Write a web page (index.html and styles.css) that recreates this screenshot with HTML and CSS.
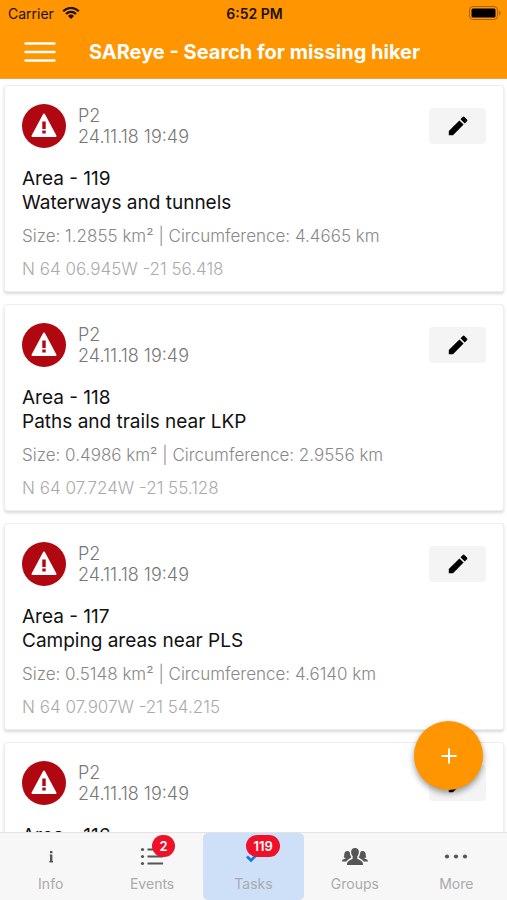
FILE: index.html
```html
<!DOCTYPE html>
<html lang="en">
<head>
<meta charset="utf-8">
<meta name="viewport" content="width=device-width, initial-scale=1">
<title>SAReye - Search for missing hiker</title>
<link rel="stylesheet" href="styles.css">
</head>
<body>
<svg class="sprite" aria-hidden="true">
  <symbol id="alert" viewBox="0 0 44 44">
    <circle cx="22" cy="22" r="22" fill="#b00710"/>
    <path d="M22 10.500 33.500 32h-23z" fill="#fff" stroke="#fff" stroke-width="2" stroke-linejoin="round"/>
    <path d="M20.300 17.500h3.400v7.500h-3.400zM20.300 26.500h3.400v3h-3.400z" fill="#b00710"/>
  </symbol>
  <symbol id="pencil" viewBox="0 0 20 20">
    <path d="M.8 15V19.200h4.200L15.600 8.600l-4.200-4.200zM19 5.200a1.200 1.200 0 0 0 0-1.700L16.500 1a1.200 1.200 0 0 0-1.700 0l-2.300 2.300 4.200 4.200z"/>
  </symbol>
</svg>
<div class="app">
  <header class="header">
    <div class="status">
      <div class="carrier">
        <span>Carrier</span>
        <svg width="18" height="12" viewBox="0 0 18 12" aria-hidden="true">
          <path d="M1.200 4.200a11 11 0 0 1 15.600 0M4 7a7 7 0 0 1 10 0" fill="none" stroke="#1c1000" stroke-width="2.200"/>
          <path d="M6 9a4.300 4.300 0 0 1 6 0l-3 3z" fill="#1c1000"/>
        </svg>
      </div>
      <div class="clock">6:52 PM</div>
      <div class="battery">
        <svg width="32" height="14" viewBox="0 0 32 14" aria-hidden="true">
          <rect x=".5" y=".5" width="28" height="13" rx="3.500" fill="none" stroke="#a86000"/>
          <rect x="2.500" y="2.500" width="24" height="9" rx="1.500"/>
          <path d="M30 4.700a2.500 2.500 0 0 1 0 4.600z" fill="#a86000"/>
        </svg>
      </div>
    </div>
    <div class="toolbar">
      <button class="menu" aria-label="Menu">
        <svg width="32" height="20" viewBox="0 0 32 20" aria-hidden="true">
          <path d="M1.500 1.500h29M1.500 10h29M1.500 18.500h29" stroke="#fff" stroke-width="2.400" stroke-linecap="round"/>
        </svg>
      </button>
      <h1>SAReye - Search for missing hiker</h1>
    </div>
  </header>

  <main class="list">
    <article class="card">
      <div class="card-head">
        <svg class="alert" aria-hidden="true"><use href="#alert"/></svg>
        <div class="meta">P2<br>24.11.18 19:49</div>
        <button class="edit" aria-label="Edit area 119"><svg aria-hidden="true"><use href="#pencil"/></svg></button>
      </div>
      <h2>Area - 119<br>Waterways and tunnels</h2>
      <p class="size">Size: 1.2855 km² | Circumference: 4.4665 km</p>
      <p class="coords">N 64 06.945W -21 56.418</p>
    </article>
    <article class="card">
      <div class="card-head">
        <svg class="alert" aria-hidden="true"><use href="#alert"/></svg>
        <div class="meta">P2<br>24.11.18 19:49</div>
        <button class="edit" aria-label="Edit area 118"><svg aria-hidden="true"><use href="#pencil"/></svg></button>
      </div>
      <h2>Area - 118<br>Paths and trails near LKP</h2>
      <p class="size">Size: 0.4986 km² | Circumference: 2.9556 km</p>
      <p class="coords">N 64 07.724W -21 55.128</p>
    </article>
    <article class="card">
      <div class="card-head">
        <svg class="alert" aria-hidden="true"><use href="#alert"/></svg>
        <div class="meta">P2<br>24.11.18 19:49</div>
        <button class="edit" aria-label="Edit area 117"><svg aria-hidden="true"><use href="#pencil"/></svg></button>
      </div>
      <h2>Area - 117<br>Camping areas near PLS</h2>
      <p class="size">Size: 0.5148 km² | Circumference: 4.6140 km</p>
      <p class="coords">N 64 07.907W -21 54.215</p>
    </article>
    <article class="card">
      <div class="card-head">
        <svg class="alert" aria-hidden="true"><use href="#alert"/></svg>
        <div class="meta">P2<br>24.11.18 19:49</div>
        <button class="edit" aria-label="Edit area 116"><svg aria-hidden="true"><use href="#pencil"/></svg></button>
      </div>
      <h2>Area - 116</h2>
    </article>
  </main>

  <div class="dock">
    <button class="fab" aria-label="Add task">
      <svg width="16" height="16" viewBox="0 0 16 16" aria-hidden="true"><path d="M8 .5v15M.5 8h15" stroke="#fff" stroke-width="2"/></svg>
    </button>
    <nav class="tabs">
      <a class="tab" href="#info">
        <svg class="tab-icon" viewBox="0 0 28 24" aria-hidden="true"><path d="M13 6h2.400v2.200H13zM12.800 9.600h2.600V16h.6v1.400h-3.600V16h.6v-5h-.2z" fill="#555"/></svg>
        <span>Info</span>
      </a>
      <a class="tab" href="#events">
        <svg class="tab-icon" viewBox="0 0 28 24" aria-hidden="true">
          <path d="M9.500 4.500H25M9.500 11.500H25M9.500 18.500H25" stroke="#555" stroke-width="2"/>
          <g fill="#555"><circle cx="4.500" cy="4.500" r="1.600"/><circle cx="4.500" cy="11.500" r="1.600"/><circle cx="4.500" cy="18.500" r="1.600"/></g>
        </svg>
        <span>Events</span>
        <b class="badge">2</b>
      </a>
      <a class="tab active" href="#tasks" aria-current="page">
        <svg class="tab-icon" viewBox="0 0 28 24" aria-hidden="true"><path d="M8 11.500l4 4 10-10" fill="none" stroke="#1275e8" stroke-width="2.600"/></svg>
        <span>Tasks</span>
        <b class="badge wide">119</b>
      </a>
      <a class="tab" href="#groups">
        <svg class="tab-icon" viewBox="0 0 28 24" aria-hidden="true">
          <g fill="#555">
            <path d="M14 3c2.700 0 4 1.800 3.900 4.300-.1 1.800-.8 3-1.600 4v2.200c.3 1.300 5.700 1.700 5.700 5.500v1H6v-1c0-3.800 5.400-4.200 5.700-5.500v-2.200c-.8-1-1.500-2.200-1.600-4C10 4.800 11.300 3 14 3z"/>
            <path d="M6.200 6c1 0 2 .4 2.500 1.100.1 2.500.8 4 1.700 5.200-.7 1.300-3.900 1.800-5 4.200H1c0-2.700 3-2.200 3.600-3.300.1-.6-1.700-.4-2-1.200.8-.8.500-2.300.8-3.600C3.700 6.900 4.700 6 6.200 6zM21.800 6c-1 0-2 .4-2.500 1.100-.1 2.500-.8 4-1.700 5.200.7 1.300 3.900 1.800 5 4.200H27c0-2.700-3-2.200-3.600-3.300-.1-.6 1.700-.4 2-1.200-.8-.8-.5-2.300-.8-3.600C24.300 6.900 23.300 6 21.800 6z"/>
          </g>
        </svg>
        <span>Groups</span>
      </a>
      <a class="tab" href="#more">
        <svg class="tab-icon" viewBox="0 0 28 24" aria-hidden="true"><g fill="#555"><circle cx="5" cy="11.500" r="2.100"/><circle cx="14" cy="11.500" r="2.100"/><circle cx="23" cy="11.500" r="2.100"/></g></svg>
        <span>More</span>
      </a>
    </nav>
  </div>
</div>
</body>
</html>
```
FILE: styles.css
```css
* { box-sizing: border-box; }
body {
  margin: 0;
  background: #fff;
  color: #111;
  font-family: Inter, "Liberation Sans", sans-serif;
}
button { border: 0; padding: 0; font: inherit; cursor: pointer; }
h1, h2, p { margin: 0; }
svg { display: block; }
.sprite { position: absolute; width: 0; height: 0; }

.app { display: flex; flex-direction: column; height: 100vh; }

.header {
  flex: none;
  background: #ff9500;
  border-bottom: 1px solid #e8a040;
}
.status {
  display: grid;
  grid-template-columns: 1fr auto 1fr;
  align-items: center;
  height: 26px;
  padding: 0 6px 0 8px;
  font-size: 14px;
  color: #1c1000;
}
.carrier { display: flex; align-items: center; gap: 8px; }
.clock { font-weight: 600; }
.battery { display: flex; justify-content: flex-end; }
.toolbar {
  display: flex;
  align-items: center;
  gap: 33px;
  height: 52px;
  padding: 0 24px;
}
.menu { background: none; }
h1 { font-size: 20px; font-weight: 700; line-height: 24px; color: #fff; white-space: nowrap; }

.list {
  flex: 1;
  min-height: 0;
  overflow: hidden;
  display: flex;
  flex-direction: column;
  gap: 12px;
  padding: 6px 3px 0 4px;
}
.card {
  flex: none;
  padding: 18px 17px 11px;
  border: 1px solid #eee;
  border-radius: 3px;
  background: #fff;
  box-shadow: 0 2px 3px rgba(0, 0, 0, 0.15);
}
.card-head { display: flex; align-items: center; gap: 12px; }
.alert { width: 44px; height: 44px; flex: none; }
.meta { flex: 1; font-size: 18px; font-weight: 300; line-height: 21px; color: #777; }
.edit {
  display: grid;
  place-items: center;
  width: 57px;
  height: 36px;
  border-radius: 4px;
  background: #f4f4f4;
}
.edit svg { width: 20px; height: 20px; }
h2 { margin-top: 19px; font-size: 19px; font-weight: 400; line-height: 24px; }
.size, .coords { font-size: 17px; font-weight: 300; line-height: 21px; }
.size { margin-top: 11px; color: #888; }
.coords { margin-top: 12px; color: #aaa; }

.dock { position: relative; flex: none; }
.fab {
  position: absolute;
  right: 24px;
  bottom: 110px;
  display: grid;
  place-items: center;
  width: 69px;
  height: 69px;
  border-radius: 50%;
  background: #ff9500;
  box-shadow: 0 3px 6px rgba(0, 0, 0, 0.4);
}
.tabs {
  display: grid;
  grid-template-columns: repeat(5, 1fr);
  height: 68px;
  border-top: 1px solid #e4e4e4;
  background: #f7f7f7;
}
.tab {
  position: relative;
  display: flex;
  flex-direction: column;
  align-items: center;
  gap: 6px;
  padding-top: 12px;
  border-radius: 5px;
  font-size: 14px;
  line-height: 17px;
  color: #aaa;
  text-decoration: none;
}
.tab.active { background: #cde0f8; }
.tab-icon { width: 28px; height: 24px; }
.badge {
  position: absolute;
  top: 2px;
  left: 50%;
  min-width: 23px;
  padding: 0 7px;
  border-radius: 12px;
  background: #ee1128;
  color: #fff;
  font-size: 13px;
  font-weight: 600;
  line-height: 22px;
  text-align: center;
}
.badge.wide { margin-left: -7px; }
```
